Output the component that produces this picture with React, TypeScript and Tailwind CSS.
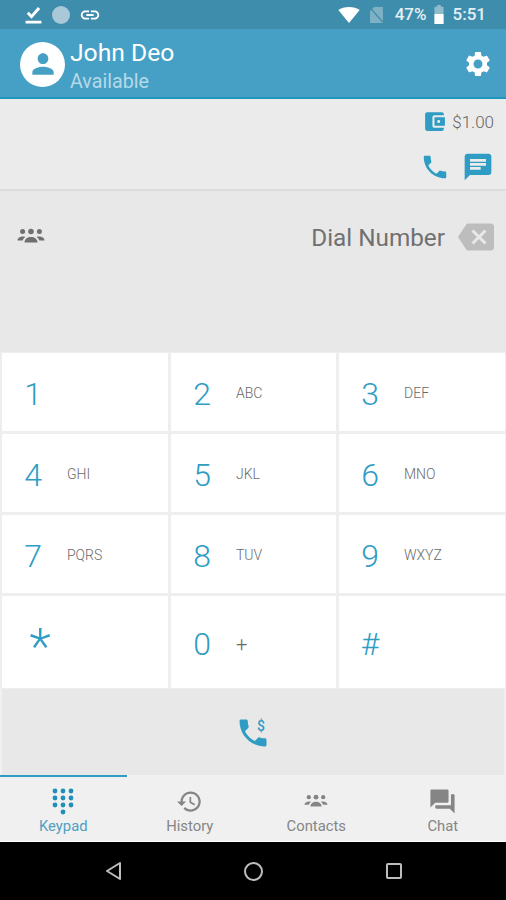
const P = {
  person: "M12 12c2.21 0 4-1.79 4-4s-1.79-4-4-4-4 1.79-4 4 1.79 4 4 4zm0 2c-2.67 0-8 1.34-8 4v2h16v-2c0-2.66-5.33-4-8-4z",
  settings: "M19.14 12.94c.04-.3.06-.61.06-.94 0-.32-.02-.64-.07-.94l2.03-1.58c.18-.14.23-.41.12-.61l-1.92-3.32c-.12-.22-.37-.29-.59-.22l-2.39.96c-.5-.38-1.03-.7-1.62-.94l-.36-2.54c-.04-.24-.24-.41-.48-.41h-3.84c-.24 0-.43.17-.47.41l-.36 2.54c-.59.24-1.13.57-1.62.94l-2.39-.96c-.22-.08-.47 0-.59.22L2.74 8.87c-.12.21-.08.47.12.61l2.03 1.58c-.05.3-.09.63-.09.94s.02.64.07.94l-2.03 1.58c-.18.14-.23.41-.12.61l1.92 3.32c.12.22.37.29.59.22l2.39-.96c.5.38 1.03.7 1.62.94l.36 2.54c.05.24.24.41.48.41h3.84c.24 0 .44-.17.47-.41l.36-2.54c.59-.24 1.13-.56 1.62-.94l2.39.96c.22.08.47 0 .59-.22l1.92-3.32c.12-.22.07-.47-.12-.61l-2.01-1.58zM12 15.6c-1.98 0-3.6-1.62-3.6-3.6s1.62-3.6 3.6-3.6 3.6 1.62 3.6 3.6-1.62 3.6-3.6 3.6z",
  phone: "M6.62 10.79c1.44 2.83 3.76 5.14 6.59 6.59l2.2-2.2c.27-.27.67-.36 1.02-.24 1.12.37 2.33.57 3.57.57.55 0 1 .45 1 1V20c0 .55-.45 1-1 1-9.39 0-17-7.61-17-17 0-.55.45-1 1-1h3.5c.55 0 1 .45 1 1 0 1.25.2 2.45.57 3.57.11.35.03.74-.25 1.02l-2.2 2.2z",
  message: "M20 2H4c-1.1 0-1.99.9-1.99 2L2 22l4-4h14c1.1 0 2-.9 2-2V4c0-1.1-.9-2-2-2zM6 9h12v2H6V9zm8 5H6v-2h8v2zm4-6H6V6h12v2z",
  history: "M13 3c-4.97 0-9 4.03-9 9H1l3.89 3.89.07.14L9 12H6c0-3.87 3.13-7 7-7s7 3.13 7 7-3.13 7-7 7c-1.93 0-3.68-.79-4.94-2.06l-1.42 1.42C8.27 19.99 10.51 21 13 21c4.97 0 9-4.03 9-9s-4.03-9-9-9zm-1 5v5l4.28 2.54.72-1.21-3.5-2.08V8H12z",
  forum: "M21 6h-2v9H6v2c0 .55.45 1 1 1h11l4 4V7c0-.55-.45-1-1-1zm-4 6V3c0-.55-.45-1-1-1H3c-.55 0-1 .45-1 1v14l4-4h10c.55 0 1-.45 1-1z",
  backspace: "M22 3H7c-.69 0-1.23.35-1.59.88L0 12l5.41 8.11c.36.53.9.89 1.59.89h15c1.1 0 2-.9 2-2V5c0-1.1-.9-2-2-2zm-3 12.59L17.59 17 14 13.41 10.41 17 9 15.59 12.59 12 9 8.41 10.41 7 14 10.59 17.59 7 19 8.41 15.41 12 19 15.59z",
  wallet: "M21 18v1c0 1.1-.9 2-2 2H5c-1.11 0-2-.9-2-2V5c0-1.1.89-2 2-2h14c1.1 0 2 .9 2 2v1h-9c-1.11 0-2 .9-2 2v8c0 1.1.89 2 2 2h9zm-9-2h10V8H12v8zm4-2.5c-.83 0-1.5-.67-1.5-1.5s.67-1.5 1.5-1.5 1.5.67 1.5 1.5-.67 1.5-1.5 1.5z",
  check: "M3.5 11 6 8.5 9.5 12 17.5 2.5 20.5 5 9.5 17.5zM2 20h20v3.5H2z",
  link: "M3.9 12c0-1.71 1.39-3.1 3.1-3.1h4V7H7c-2.76 0-5 2.24-5 5s2.24 5 5 5h4v-1.9H7c-1.71 0-3.1-1.39-3.1-3.1zM8 13h8v-2H8v2zm9-6h-4v1.9h4c1.71 0 3.1 1.39 3.1 3.1s-1.39 3.1-3.1 3.1h-4V17h4c2.76 0 5-2.24 5-5s-2.24-5-5-5z",
};

function I({ d, className }: { d: string; className: string }) {
  return (
    <svg viewBox="0 0 24 24" fill="currentColor" className={className}>
      <path d={d} />
    </svg>
  );
}

function Group({ className }: { className: string }) {
  return (
    <svg viewBox="0 0 28 18" fill="currentColor" className={className}>
      <circle cx="14" cy="4.5" r="2.8" />
      <circle cx="5.6" cy="4.5" r="2.5" />
      <circle cx="22.4" cy="4.5" r="2.5" />
      <path d="M7.5 15.5c0-3.6 3-5.6 6.5-5.6s6.5 2 6.5 5.6z" />
      <path d="M0.5 13.5c0-2.4 2.4-4 5.4-4 .9 0 1.7.1 2.4.4-1.3 1-2.3 2.2-2.6 3.6z" />
      <path d="M27.5 13.5c0-2.4-2.4-4-5.4-4-.9 0-1.7.1-2.4.4 1.3 1 2.3 2.2 2.6 3.6z" />
    </svg>
  );
}

function Keypad({ className }: { className: string }) {
  const dots = [
    [3, 3], [11, 3], [19, 3],
    [3, 10], [11, 10], [19, 10],
    [3, 17], [11, 17], [19, 17],
    [11, 24],
  ];
  return (
    <svg viewBox="0 0 22 27" fill="currentColor" className={className}>
      {dots.map(([x, y]) => (
        <circle key={`${x}-${y}`} cx={x} cy={y} r="2.4" />
      ))}
    </svg>
  );
}

function Key({ digit, letters, big }: { digit: string; letters?: string; big?: boolean }) {
  return (
    <div className="flex items-center bg-white pl-[15px] pt-[4px]">
      <span className={`shrink-0 text-center text-[#2f9cc4] ${big ? "mt-[6px] w-[46px] text-[50px] font-light leading-[46px]" : "w-[32px] text-[32px] font-light leading-[36px]"}`}>
        {digit}
      </span>
      {letters ? (
        <span className={`ml-[18px] font-light text-[#6a6a6a] ${letters === "+" ? "text-[20px] leading-[20px]" : "mb-[2px] text-[14px]"}`}>{letters}</span>
      ) : null}
    </div>
  );
}

function Tab({ label, active, children }: { label: string; active?: boolean; children: React.ReactNode }) {
  return (
    <div className={`flex flex-col items-center ${active ? "text-[#4f9fc0]" : "text-[#858585]"}`}>
      <div className="flex h-[30px] items-center justify-center">{children}</div>
      <span className="mt-[1px] text-[14.8px] leading-[18px]">{label}</span>
    </div>
  );
}

export default function App() {
  return (
    <div className="flex h-[900px] w-[506px] flex-col overflow-hidden bg-[#f0f0f0]" style={{ fontFamily: "Roboto, sans-serif" }}>
      {/* status bar */}
      <div className="flex h-[29px] shrink-0 items-center bg-[#3f8dac] pl-[24px] pr-[20px] text-white">
        <I d={P.check} className="h-[19px] w-[19px]" />
        <div className="ml-[9px] h-[18px] w-[18px] rounded-full bg-[#a9c8d8]" />
        <I d={P.link} className="ml-[9px] h-[22px] w-[22px]" />
        <svg viewBox="0 0 24 18" fill="currentColor" className="ml-auto h-[16px] w-[22px]">
          <path d="M12 18 0 3.5C3 1.3 7.2 0 12 0s9 1.3 12 3.5z" />
        </svg>
        <svg viewBox="0 0 16 20" className="ml-[9px] h-[16px] w-[15px]">
          <path d="M5 0h11v20H0V5z" fill="#7fb1c5" />
          <path d="M0 1 16 19" stroke="#3f8dac" strokeWidth="1.6" />
        </svg>
        <span className="ml-[11px] text-[17px] font-medium leading-none text-[#e4eff4]">47%</span>
        <svg viewBox="0 0 12 21" className="ml-[6px] h-[19px] w-[12px]">
          <path d="M4 0h4v2h3v19H1V2h3z" fill="#8fbccd" />
          <path d="M1 10h10v11H1z" fill="#fff" />
        </svg>
        <span className="ml-[8px] text-[17px] font-medium leading-none text-[#e4eff4]">5:51</span>
      </div>

      {/* header */}
      <div className="flex h-[70px] shrink-0 items-center border-b-2 border-[#1f96bd] bg-[#46a0c5] pl-[20px] pr-[13px] pt-[2px]">
        <div className="flex h-[45px] w-[45px] items-center justify-center rounded-full bg-white">
          <I d={P.person} className="h-[32px] w-[32px] text-[#46a0c5]" />
        </div>
        <div className="ml-[5px] mt-[6px] flex flex-col">
          <span className="text-[24.7px] leading-[29px] text-white">John Deo</span>
          <span className="text-[19.7px] leading-[30px] text-[#b5d9e8]">Available</span>
        </div>
        <I d={P.settings} className="ml-auto h-[30px] w-[30px] text-white" />
      </div>

      {/* balance */}
      <div className="flex h-[92px] shrink-0 flex-col items-end border-b-2 border-[#dcdcdc] bg-[#ebebeb] pr-[12px] pt-[10px]">
        <div className="flex items-center">
          <I d={P.wallet} className="h-[25px] w-[25px] text-[#2f9cc4]" />
          <span className="ml-[5px] text-[17px] font-light leading-[24px] text-[#666]">$1.00</span>
        </div>
        <div className="mt-[17px] flex items-center gap-[12px]">
          <I d={P.phone} className="h-[30px] w-[30px] text-[#2f9cc4]" />
          <I d={P.message} className="h-[32px] w-[32px] text-[#2f9cc4]" />
        </div>
      </div>

      {/* display */}
      <div className="flex h-[161px] shrink-0 items-start bg-[#e8e8e8] pl-[17px] pr-[12px] pt-[28px]">
        <Group className="mt-[8px] h-[18px] w-[28px] text-[#6f6f6f]" />
        <span className="ml-auto mt-[1px] text-[24.3px] leading-[36px] text-[#707070]">Dial Number</span>
        <I d={P.backspace} className="ml-[13px] h-[36px] w-[36px] text-[#bdbdbd]" />
      </div>

      {/* keypad */}
      <div className="grid h-[337px] shrink-0 grid-cols-[166px_165px_166px] grid-rows-[78px_78px_78px_92px] gap-[3px] bg-[#eeeeee] pl-[2px] pt-[1px]">
        <Key digit="1" />
        <Key digit="2" letters="ABC" />
        <Key digit="3" letters="DEF" />
        <Key digit="4" letters="GHI" />
        <Key digit="5" letters="JKL" />
        <Key digit="6" letters="MNO" />
        <Key digit="7" letters="PQRS" />
        <Key digit="8" letters="TUV" />
        <Key digit="9" letters="WXYZ" />
        <Key digit="*" big />
        <Key digit="0" letters="+" />
        <Key digit="#" />
      </div>

      {/* call */}
      <div className="mx-[2px] flex h-[86px] shrink-0 items-center justify-center bg-[#e8e8e8] text-[#2f9cc4]">
        <div className="relative mt-[2px] h-[36px] w-[36px]">
          <I d={P.phone} className="h-[36px] w-[36px]" />
          <span className="absolute right-[6px] top-[3px] text-[14px] font-medium leading-[16px]">$</span>
        </div>
      </div>

      {/* tabs */}
      <div className="flex h-[67px] shrink-0 flex-col border-b border-white bg-[#f0f0f0]">
        <div className="h-[2px] w-[127px] bg-[#2f9cc4]" />
        <div className="grid flex-1 grid-cols-4 pt-[9px]">
          <Tab label="Keypad" active>
            <Keypad className="h-[27px] w-[22px] text-[#1f8fb8]" />
          </Tab>
          <Tab label="History">
            <I d={P.history} className="h-[27px] w-[27px]" />
          </Tab>
          <Tab label="Contacts">
            <Group className="h-[16px] w-[24px]" />
          </Tab>
          <Tab label="Chat">
            <I d={P.forum} className="h-[29px] w-[29px]" />
          </Tab>
        </div>
      </div>

      {/* nav */}
      <div className="flex flex-1 items-center bg-black pl-[104px] text-[#bdbdbd]">
        <svg viewBox="0 0 20 20" fill="none" stroke="currentColor" strokeWidth="2" className="h-[20px] w-[20px]">
          <path d="M16 2 3 10l13 8z" strokeLinejoin="round" />
        </svg>
        <div className="ml-[120px] h-[19px] w-[19px] rounded-full border-2 border-current" />
        <div className="ml-[123px] h-[16px] w-[16px] rounded-[2px] border-2 border-current" />
      </div>
    </div>
  );
}
